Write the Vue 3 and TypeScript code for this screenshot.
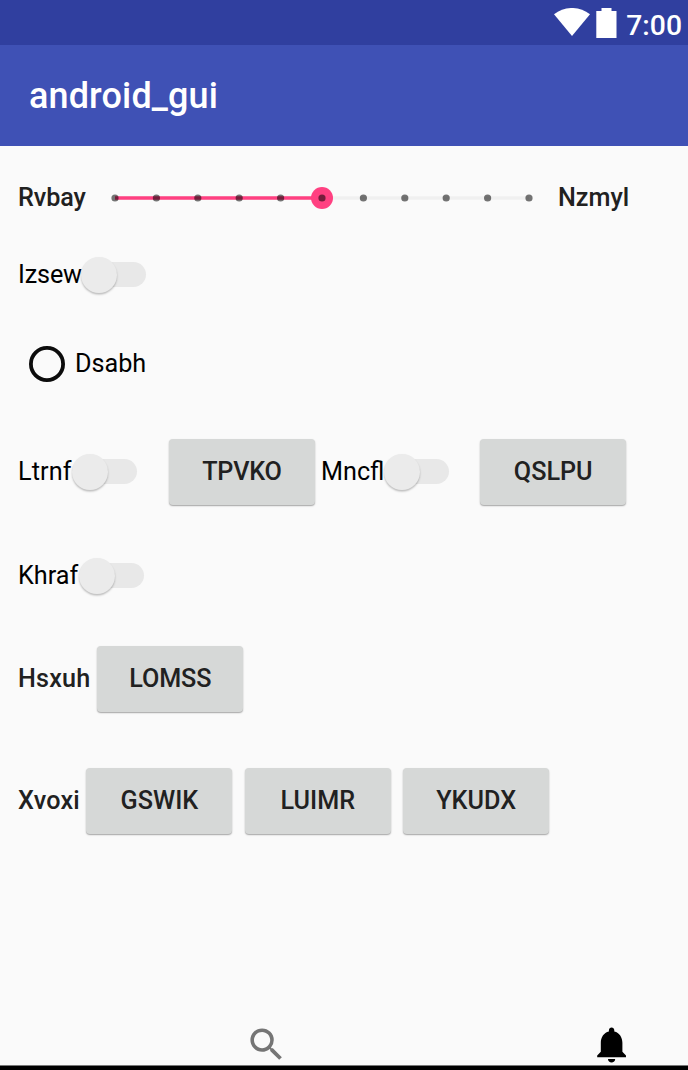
<script setup lang="ts">
import { ref } from 'vue'

interface Item {
  kind: 'label' | 'switch' | 'button' | 'radio' | 'slider'
  text: string
  width: number
  gap?: number
  tracking?: number
}

const rows = ref<{ height: number; items: Item[] }[]>([
  {
    height: 104,
    items: [
      { kind: 'label', text: 'Rvbay', width: 90, tracking: -0.1 },
      { kind: 'slider', text: '', width: 432 },
      { kind: 'label', text: 'Nzmyl', width: 80, gap: 18 },
    ],
  },
  { height: 49, items: [{ kind: 'switch', text: 'Izsew', width: 63.2, tracking: -0.15 }] },
  { height: 129, items: [{ kind: 'radio', text: 'Dsabh', width: 71, gap: 11 }] },
  {
    height: 87,
    items: [
      { kind: 'switch', text: 'Ltrnf', width: 54.4, tracking: 0.15 },
      { kind: 'button', text: 'TPVKO', width: 146, gap: 31.6, tracking: -0.2 },
      { kind: 'switch', text: 'Mncfl', width: 63, gap: 6 },
      { kind: 'button', text: 'QSLPU', width: 146, gap: 31.2 },
    ],
  },
  { height: 121, items: [{ kind: 'switch', text: 'Khraf', width: 61 }] },
  {
    height: 86,
    items: [
      { kind: 'label', text: 'Hsxuh', width: 79.3, tracking: 0.2 },
      { kind: 'button', text: 'LOMSS', width: 146, tracking: -0.15 },
    ],
  },
  {
    height: 158,
    items: [
      { kind: 'label', text: 'Xvoxi', width: 68.4, tracking: 0.2 },
      { kind: 'button', text: 'GSWIK', width: 146 },
      { kind: 'button', text: 'LUIMR', width: 146, gap: 12.4 },
      { kind: 'button', text: 'YKUDX', width: 146, gap: 12.4 },
    ],
  },
])

const ticks = Array.from({ length: 11 }, (_, i) => 7 + i * 41.4)
</script>

<template>
  <div class="screen">
    <header class="status">
      <svg class="wifi" width="36" height="28" viewBox="0 0 36 28">
        <path d="M0 6.200C10.500-2.100 25.500-2.100 36 6.200L18 28Z" fill="#fff" />
      </svg>
      <svg class="battery" width="21" height="30" viewBox="0 0 21 30">
        <path d="M5.500 0H15.500V3H20.500V30H.3V3H5.500Z" fill="#fff" />
      </svg>
      <span class="clock">7:00</span>
    </header>
    <div class="appbar"><h1>android_gui</h1></div>

    <main>
      <div v-for="(row, r) in rows" :key="r" class="row" :style="{ height: row.height + 'px' }">
        <div
          v-for="(item, i) in row.items"
          :key="i"
          class="item"
          :style="{ marginLeft: (item.gap ?? 0) + 'px', letterSpacing: (item.tracking ?? 0) + 'px' }"
        >
          <span v-if="item.kind === 'label'" class="label" :style="{ width: item.width + 'px' }">{{ item.text }}</span>

          <template v-else-if="item.kind === 'switch'">
            <span class="plain" :style="{ width: item.width + 'px' }">{{ item.text }}</span>
            <span class="switch"><i class="thumb"></i></span>
          </template>

          <template v-else-if="item.kind === 'radio'">
            <svg class="ring" width="36" height="36" viewBox="0 0 36 36">
              <circle cx="18" cy="18" r="16.100" fill="none" stroke="#0c0c0c" stroke-width="3.800" />
            </svg>
            <span class="plain">{{ item.text }}</span>
          </template>

          <button v-else-if="item.kind === 'button'" type="button">{{ item.text }}</button>

          <svg v-else class="slider" width="432" height="24" viewBox="0 0 432 24">
            <path d="M7 12H421" stroke="#f0f0f0" stroke-width="3.600" />
            <path d="M7 12H214" stroke="#ff4081" stroke-width="3.600" />
            <circle cx="214" cy="12" r="11" fill="#ff4081" />
            <circle v-for="x in ticks" :key="x" :cx="x" cy="12" r="3.600" fill="#000" fill-opacity=".54" />
          </svg>
        </div>
      </div>
    </main>

    <footer>
      <svg class="search" width="43.200" height="43.200" viewBox="0 0 24 24">
        <path fill="#757575" d="M15.500 14h-.79l-.28-.27A6.471 6.471 0 0 0 16 9.500 6.500 6.500 0 1 0 9.500 16c1.610 0 3.090-.59 4.230-1.570l.27.28v.79l5 4.990L20.490 19l-4.990-5zm-6 0C7.010 14 5 11.990 5 9.500S7.010 5 9.500 5 14 7.010 14 9.500 11.990 14 9.500 14z" />
      </svg>
      <svg class="bell" width="43.200" height="43.200" viewBox="0 0 24 24">
        <path d="M12 22c1.100 0 2-.9 2-2h-4c0 1.100.89 2 2 2zm6-6v-5c0-3.070-1.640-5.640-4.500-6.320V4c0-.83-.67-1.500-1.500-1.500s-1.500.67-1.500 1.500v.68C7.630 5.360 6 7.920 6 11v5l-2 2v1h16v-1l-2-2z" />
      </svg>
    </footer>
    <div class="navbar"></div>
  </div>
</template>

<style>
body { margin: 0; background: #fafafa; }
</style>

<style scoped>
.screen {
  width: 688px;
  height: 1070px;
  overflow: hidden;
  display: flex;
  flex-direction: column;
  background: #fafafa;
  font-family: Roboto, "Liberation Sans", sans-serif;
  font-size: 25.2px;
  line-height: 30px;
  color: #000;
}
.status {
  box-sizing: border-box;
  height: 45px;
  flex: none;
  display: flex;
  justify-content: flex-end;
  align-items: flex-start;
  padding: 8px 6px 0 0;
  background: #303f9f;
  color: #fff;
}
.battery { margin: 0 9px 0 6.500px; }
.clock { font-size: 28.300px; font-weight: 500; line-height: 35px; }
.appbar {
  box-sizing: border-box;
  height: 101px;
  flex: none;
  display: flex;
  align-items: center;
  padding-left: 29px;
  background: #3f51b5;
}
h1 { margin: 0; font-size: 36px; font-weight: 500; line-height: 42px; letter-spacing: .13px; color: #fff; }
.row, .item { display: flex; align-items: center; }
.row { padding-left: 18px; }
.label, .plain { flex: none; white-space: nowrap; }
.label { font-weight: 500; color: #212121; }
.switch {
  width: 61px;
  height: 25px;
  margin-left: 4px;
  border-radius: 13px;
  background: #e8e8e8;
  display: flex;
  align-items: center;
}
.thumb {
  flex: none;
  width: 36px;
  height: 36px;
  margin-left: -4px;
  border-radius: 50%;
  background: #ebebeb;
  box-shadow: 0 1.500px 2px rgba(0, 0, 0, .25);
}
.ring { margin-right: 10px; }
button {
  width: 146px;
  height: 66px;
  padding: 0;
  border: 0;
  border-radius: 4px;
  background: #d6d8d7;
  box-shadow: 0 1px 1.500px rgba(0, 0, 0, .35);
  font: 500 25.2px/30px Roboto, "Liberation Sans", sans-serif;
  letter-spacing: inherit;
  color: #212121;
}
.slider { display: block; }
footer {
  margin-top: auto;
  height: 42.500px;
  flex: none;
  display: flex;
  padding-left: 245px;
}
.bell { margin-left: 301.500px; }
.navbar { box-sizing: border-box; height: 5px; flex: none; border-top: 1px solid #777; background: #000; }
</style>
